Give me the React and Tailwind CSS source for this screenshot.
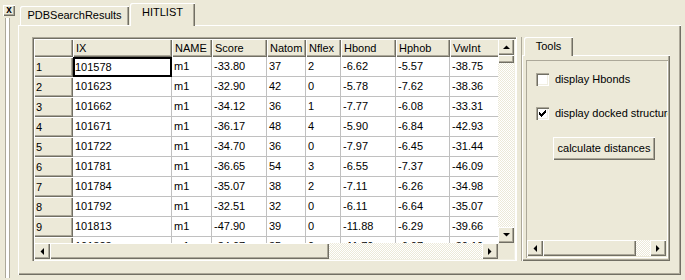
import React from 'react';

// ─── classic 3D borders ─────────────────────────────
const raised = 'bg-[#ece9d8] shadow-[inset_1px_1px_#fff,inset_-1px_-1px_#716f64,inset_-2px_-2px_#aca899]';
const sunken = 'shadow-[inset_1px_1px_#aca899,inset_2px_2px_#716f64,inset_-1px_-1px_#fff,inset_-2px_-2px_#f1efe2]';
const track = 'bg-[#f4f3ee] bg-[image:repeating-conic-gradient(#ece9d8_0_25%,#fff_0_50%)] bg-size-[2px_2px] bg-[length:2px_2px]';

const columns = [
    { label: 'IX', w: 'w-[99px]' },
    { label: 'NAME', w: 'w-[40px]' },
    { label: 'Score', w: 'w-[55px]' },
    { label: 'Natom', w: 'w-[39px]' },
    { label: 'Nflex', w: 'w-[35px]' },
    { label: 'Hbond', w: 'w-[55px]' },
    { label: 'Hphob', w: 'w-[54px]' },
    { label: 'VwInt', w: 'w-[60px]' },
];

const rows = [
    ['1', '101578', 'm1', '-33.80', '37', '2', '-6.62', '-5.57', '-38.75'],
    ['2', '101623', 'm1', '-32.90', '42', '0', '-5.78', '-7.62', '-38.36'],
    ['3', '101662', 'm1', '-34.12', '36', '1', '-7.77', '-6.08', '-33.31'],
    ['4', '101671', 'm1', '-36.17', '48', '4', '-5.90', '-6.84', '-42.93'],
    ['5', '101722', 'm1', '-34.70', '36', '0', '-7.97', '-6.45', '-31.44'],
    ['6', '101781', 'm1', '-36.65', '54', '3', '-6.55', '-7.37', '-46.09'],
    ['7', '101784', 'm1', '-35.07', '38', '2', '-7.11', '-6.26', '-34.98'],
    ['8', '101792', 'm1', '-32.51', '32', '0', '-6.11', '-6.64', '-35.07'],
    ['9', '101813', 'm1', '-47.90', '39', '0', '-11.88', '-6.29', '-39.66'],
    ['10', '101823', 'm1', '-34.07', '35', '0', '-11.70', '-6.07', '-30.10'],
];

function Arrow({ dir }) {
    const pts = {
        up: '0,4 7,4 3.5,0.5',
        down: '0,0 7,0 3.5,3.5',
        left: '4,0 4,7 0.5,3.5',
        right: '0,0 0,7 3.5,3.5',
    }[dir];
    const vertical = dir === 'up' || dir === 'down';
    return (
        <svg width={vertical ? 7 : 4} height={vertical ? 4 : 7} viewBox={vertical ? '0 0 7 4' : '0 0 4 7'}>
            <polygon points={pts} fill="#000" />
        </svg>
    );
}

function ScrollBtn({ dir }) {
    return (
        <div className={`w-[16px] h-[16px] flex-none flex items-center justify-center ${raised}`}>
            <Arrow dir={dir} />
        </div>
    );
}

function CheckBox({ checked }) {
    return (
        <div className={`w-[13px] h-[13px] flex-none bg-white ${sunken}`}>
            {checked && (
                <svg width="13" height="13" viewBox="0 0 13 13" shapeRendering="crispEdges">
                    <path d="M3 5h1v3h-1z M4 6h1v3h-1z M5 7h1v3h-1z M6 6h1v3h-1z M7 5h1v3h-1z M8 4h1v3h-1z M9 3h1v3h-1z" fill="#000" />
                </svg>
            )}
        </div>
    );
}

export default function App() {
    return (
        <div className="w-[685px] h-[280px] bg-[#ece9d8] flex overflow-hidden font-['Liberation_Sans',Arial,sans-serif] text-[11px] leading-[13px] text-black">

            {/* ─── Left strip ─────────────────────────── */}
            <div className="w-[18px] flex-none flex flex-col">
                <div className={`ml-[3px] mt-[5px] w-[12px] h-[11px] flex items-center justify-center font-bold text-[10px] leading-none pb-[1px] ${raised}`}>
                    x
                </div>
                <div className="ml-[5px] mt-[2px] w-[5px] h-[260px] border-x border-[#aca899] bg-white" />
            </div>

            {/* ─── Main tab control ───────────────────── */}
            <div className="w-[663px] flex-none flex flex-col">
                <div className="h-[25px] flex items-end pl-[2px] relative z-10">
                    <div className="w-[109px] h-[19px] pt-[3px] text-center rounded-tl-[2px] bg-[#ece9d8] shadow-[inset_1px_1px_#fff,inset_-1px_0_#716f64,inset_-2px_0_#aca899]">
                        PDBSearchResults
                    </div>
                    <div className="ml-[1px] w-[65px] h-[23px] -mb-[1px] pt-[3px] text-center rounded-tl-[2px] bg-[#ece9d8] shadow-[inset_1px_1px_#fff,inset_-1px_0_#716f64,inset_-2px_0_#aca899]">
                        HITLIST
                    </div>
                </div>

                <div className="h-[250px] pl-[14px] pt-[12px] flex items-start shadow-[inset_1px_1px_#fff,inset_-1px_-1px_#716f64,inset_-2px_-2px_#aca899]">

                    {/* Grid */}
                    <div className={`w-[484px] h-[224px] flex-none p-[2px] ${sunken}`}>
                        <div className="w-[480px] h-[220px] flex flex-col">
                            <div className="h-[204px] flex">
                                <div className="w-[464px] h-[204px] overflow-hidden bg-white">
                                    <div className="flex h-[18px]">
                                        <div className={`w-[39px] h-[18px] flex-none ${raised}`} />
                                        {columns.map(c => (
                                            <div key={c.label} className={`${c.w} h-[18px] flex-none pl-[3px] flex items-center whitespace-nowrap overflow-hidden ${raised}`}>
                                                {c.label}
                                            </div>
                                        ))}
                                    </div>
                                    {rows.map((r, i) => (
                                        <div key={r[0]} className="flex h-[20px]">
                                            <div className={`w-[39px] h-[20px] flex-none pl-[2px] flex items-center ${raised}`}>
                                                {r[0]}
                                            </div>
                                            {r.slice(1).map((v, j) => (
                                                <div
                                                    key={j}
                                                    className={`${columns[j].w} h-[20px] flex-none flex items-center whitespace-nowrap overflow-hidden
                                                        ${i === 0 && j === 0
                                                            ? 'border-2 border-black pl-0'
                                                            : 'border-r border-b border-[#c0c0c0] pl-[2px]'}`}
                                                >
                                                    {v}
                                                </div>
                                            ))}
                                        </div>
                                    ))}
                                </div>
                                <div className="w-[16px] h-[204px] flex flex-col">
                                    <ScrollBtn dir="up" />
                                    <div className={`h-[8px] w-[16px] flex-none ${raised}`} />
                                    <div className={`flex-1 ${track}`} />
                                    <ScrollBtn dir="down" />
                                </div>
                            </div>
                            <div className="h-[16px] flex">
                                <div className="w-[464px] flex">
                                    <ScrollBtn dir="left" />
                                    <div className={`w-[279px] h-[16px] flex-none ${raised}`} />
                                    <div className={`flex-1 ${track}`} />
                                    <ScrollBtn dir="right" />
                                </div>
                                <div className="w-[16px] h-[16px] bg-[#ece9d8]" />
                            </div>
                        </div>
                    </div>

                    {/* Splitter */}
                    <div className="w-[6px] h-[224px] flex-none border-l border-r border-l-white border-r-[#aca899]" />

                    {/* Tools tab control */}
                    <div className="w-[148px] flex-none flex flex-col">
                        <div className="h-[18px] flex items-end pl-[2px] relative z-10">
                            <div className="w-[49px] h-[19px] -mb-[1px] pt-[3px] text-center rounded-tl-[2px] bg-[#ece9d8] shadow-[inset_1px_1px_#fff,inset_-1px_0_#716f64,inset_-2px_0_#aca899]">
                                Tools
                            </div>
                        </div>
                        <div className="h-[206px] pl-[4px] pt-[5px] shadow-[inset_1px_1px_#fff,inset_-1px_-1px_#716f64,inset_-2px_-2px_#aca899]">
                            <div className="w-[142px] h-[198px] p-[1px] flex flex-col overflow-hidden shadow-[inset_1px_1px_#aca899,inset_-1px_-1px_#fff]">
                                <div className="mt-[12px] pl-[9px] flex items-center gap-[6px] whitespace-nowrap">
                                    <CheckBox />
                                    <span>display Hbonds</span>
                                </div>
                                <div className="mt-[21px] pl-[9px] flex items-center gap-[6px] whitespace-nowrap">
                                    <CheckBox checked />
                                    <span>display docked structure</span>
                                </div>
                                <div className={`mt-[17px] ml-[26px] w-[102px] h-[23px] flex items-center justify-center whitespace-nowrap ${raised}`}>
                                    calculate distances
                                </div>
                                <div className="mt-auto mb-[1px] w-[139px] h-[16px] flex">
                                    <ScrollBtn dir="left" />
                                    <div className={`w-[93px] h-[16px] flex-none ${raised}`} />
                                    <div className={`flex-1 ${track}`} />
                                    <ScrollBtn dir="right" />
                                </div>
                            </div>
                        </div>
                    </div>
                </div>
            </div>
        </div>
    );
}
